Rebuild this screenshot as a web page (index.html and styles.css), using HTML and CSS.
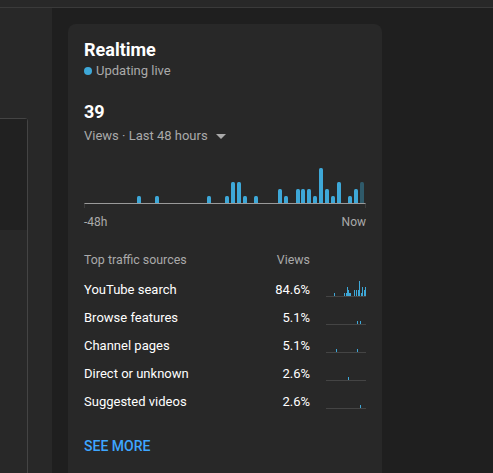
FILE: index.html
```html
<!DOCTYPE html>
<html>
<head>
<meta charset="utf-8">
<link rel="stylesheet" href="styles.css">
</head>
<body>
<div class="topbar"></div>
<div class="main">
  <aside class="leftcol">
    <div class="leftbox"><div class="leftthumb"></div></div>
  </aside>
  <section class="card">
    <h1 class="title">Realtime</h1>
    <div class="live"><span class="dot"></span>Updating live</div>
    <div class="count">39</div>
    <div class="period">Views · Last 48 hours<span class="caret"></span></div>
    <div class="chart">
      <div class="bars">
        <i></i><i></i><i></i><i></i><i></i><i></i><i></i><i></i><i></i>
        <i><b class="h1"></b></i><i></i><i></i>
        <i><b class="h1"></b></i><i></i><i></i><i></i><i></i><i></i><i></i><i></i><i></i>
        <i><b class="h1"></b></i><i></i><i></i>
        <i><b class="h1"></b></i><i><b class="h3"></b></i><i><b class="h3"></b></i><i><b class="h1"></b></i><i></i>
        <i><b class="h1"></b></i><i></i><i></i><i></i>
        <i><b class="h2"></b></i><i><b class="h1"></b></i><i></i>
        <i><b class="h2"></b></i><i><b class="h2"></b></i><i><b class="h2"></b></i><i><b class="h1"></b></i>
        <i><b class="h5"></b></i><i><b class="h2"></b></i><i><b class="h1"></b></i><i><b class="h3"></b></i><i></i>
        <i><b class="h1"></b></i><i><b class="h2"></b></i><i><b class="h3 now"></b></i>
      </div>
      <div class="axis"></div>
      <div class="labels"><span>-48h</span><span>Now</span></div>
    </div>
    <div class="sources">
      <div class="head">Top traffic sources</div>
      <div class="head num">Views</div>
      <div></div>

      <div class="name">YouTube search</div>
      <div class="num">84.6%</div>
      <svg class="spark" viewBox="0 0 40 28" width="40" height="28">
        <rect class="base" x="0" y="20" width="40" height="1"/>
        <rect x="7.5" y="17" width="1" height="3"/>
        <rect x="17.5" y="17" width="1" height="3"/>
        <rect x="20" y="17" width="1" height="3"/>
        <rect x="20.8" y="11" width="1" height="9"/>
        <rect x="21.7" y="14" width="1" height="6"/>
        <rect x="22.5" y="17" width="1" height="3"/>
        <rect x="24.2" y="17" width="1" height="3"/>
        <rect x="27.5" y="14" width="1" height="6"/>
        <rect x="28.3" y="17" width="1" height="3"/>
        <rect x="30" y="14" width="1" height="6"/>
        <rect x="31.7" y="14" width="1" height="6"/>
        <rect x="32.5" y="17" width="1" height="3"/>
        <rect x="33.3" y="5" width="1" height="15"/>
        <rect x="35" y="17" width="1" height="3"/>
        <rect x="35.8" y="11" width="1" height="9"/>
        <rect x="37.5" y="17" width="1" height="3"/>
        <rect x="38.3" y="14" width="1" height="6"/>
        <rect x="39" y="11" width="1" height="9"/>
      </svg>

      <div class="name">Browse features</div>
      <div class="num">5.1%</div>
      <svg class="spark" viewBox="0 0 40 28" width="40" height="28">
        <rect class="base" x="0" y="20" width="40" height="1"/>
        <rect x="30.8" y="17" width="1" height="3"/>
        <rect x="34" y="17" width="1" height="3"/>
      </svg>

      <div class="name">Channel pages</div>
      <div class="num">5.1%</div>
      <svg class="spark" viewBox="0 0 40 28" width="40" height="28">
        <rect class="base" x="0" y="20" width="40" height="1"/>
        <rect x="9.7" y="17" width="1" height="3"/>
        <rect x="30.8" y="17" width="1" height="3"/>
      </svg>

      <div class="name">Direct or unknown</div>
      <div class="num">2.6%</div>
      <svg class="spark" viewBox="0 0 40 28" width="40" height="28">
        <rect class="base" x="0" y="20" width="40" height="1"/>
        <rect x="21.7" y="17" width="1" height="3"/>
      </svg>

      <div class="name">Suggested videos</div>
      <div class="num">2.6%</div>
      <svg class="spark" viewBox="0 0 40 28" width="40" height="28">
        <rect class="base" x="0" y="20" width="40" height="1"/>
        <rect x="34" y="17" width="1" height="3"/>
      </svg>
    </div>
    <a class="more" href="#">SEE MORE</a>
  </section>
</div>
</body>
</html>
```

FILE: styles.css
```css
* { box-sizing: border-box; }
html, body {
  margin: 0;
  padding: 0;
  height: 473px;
  overflow: hidden;
  background: #1f1f1f;
  font-family: Roboto, "Liberation Sans", Arial, sans-serif;
  color: #ffffff;
}
.topbar {
  height: 8px;
  background: #282828;
  border-bottom: 1px solid #3a3a3a;
}
.main {
  display: flex;
  gap: 16px;
  height: 465px;
  overflow: hidden;
}
.leftcol {
  width: 52px;
  flex: none;
  background: #282828;
  padding-top: 110px;
  overflow: hidden;
}
.leftbox {
  margin-left: -10px;
  width: 38px;
  height: 400px;
  border: 1px solid #444444;
  border-top-right-radius: 3px;
}
.leftthumb {
  height: 111px;
  background: #212121;
}
.card {
  width: 314px;
  flex: none;
  margin-top: 16px;
  height: 470px;
  background: #282828;
  border-radius: 8px;
  padding: 14px 16px 0 16px;
}
.title {
  margin: 0;
  font-size: 18px;
  line-height: 24px;
  font-weight: 700;
}
.live {
  display: flex;
  align-items: center;
  gap: 4px;
  font-size: 13px;
  line-height: 18px;
  color: #aaaaaa;
}
.dot {
  width: 8px;
  height: 8px;
  border-radius: 50%;
  background: #3ea8d8;
}
.count {
  margin-top: 20px;
  font-size: 18px;
  line-height: 24px;
  font-weight: 700;
}
.period {
  margin-top: 3px;
  font-size: 13px;
  line-height: 18px;
  color: #aaaaaa;
  display: flex;
  align-items: center;
}
.caret {
  margin-left: 8px;
  width: 0;
  height: 0;
  border-left: 5px solid transparent;
  border-right: 5px solid transparent;
  border-top: 5px solid #aaaaaa;
}
.bars {
  height: 58px;
  display: flex;
  align-items: flex-end;
}
.bars i {
  flex: 1 1 0;
  display: flex;
  align-items: flex-end;
  height: 100%;
}
.bars b {
  width: 4px;
  background: #3ea8d8;
  border-radius: 1.5px 1.5px 0 0;
}
.bars b.now { background: #2f5a6a; }
.bars .h1 { height: 7px; }
.bars .h2 { height: 14px; }
.bars .h3 { height: 21px; }
.bars .h5 { height: 35px; }
.axis {
  height: 5px;
  border-top: 1px solid #9a9a9a;
  border-left: 1px solid #3c3c3c;
  border-right: 1px solid #3c3c3c;
}
.labels {
  margin-top: 6px;
  display: flex;
  justify-content: space-between;
  font-size: 12px;
  line-height: 16px;
  color: #aaaaaa;
}
.sources {
  margin-top: 22px;
  display: grid;
  grid-template-columns: 1fr 60px 40px;
  column-gap: 16px;
  align-items: start;
}
.head {
  font-size: 12.4px;
  line-height: 16px;
  color: #aaaaaa;
  margin-bottom: 8px;
}
.name, .sources .num {
  font-size: 13px;
  line-height: 28px;
}
.sources .head.num {
  font-size: 12.4px;
  line-height: 16px;
}
.num { text-align: right; }
.spark { display: block; shape-rendering: crispEdges; }
.spark rect { fill: #3ea8d8; }
.spark rect.base { fill: #444444; }
.more {
  display: inline-block;
  margin-top: 20px;
  font-size: 14px;
  line-height: 20px;
  font-weight: 500;
  color: #3ea6ff;
  text-decoration: none;
}
```
